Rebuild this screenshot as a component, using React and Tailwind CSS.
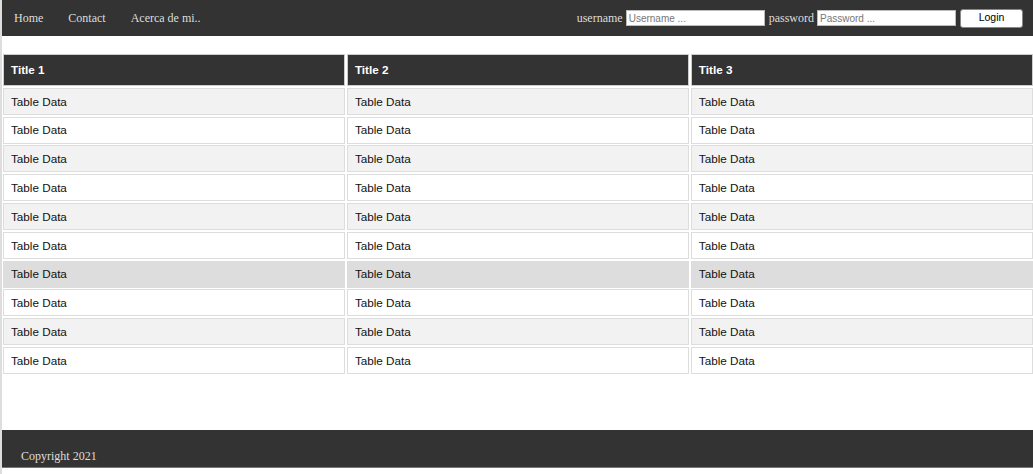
import React from "react";

const titles = ["Title 1", "Title 2", "Title 3"];
const rows = Array.from({ length: 10 }, (_, i) => i);

function rowBg(i) {
  if (i === 6) return "bg-[#dddddd]";
  return i % 2 === 0 ? "bg-[#f2f2f2]" : "bg-white";
}

export default function App() {
  return (
    <div className="min-h-[474px] bg-white border-l-2 border-[#dddddd] flex flex-col font-['Liberation_Sans',Arial,sans-serif]">
      <header className="h-[36px] bg-[#333333] flex items-center justify-between pr-[10px] font-['Liberation_Serif','Times_New_Roman',serif] text-[12px] text-[#dddddd]">
        <nav className="flex items-center pl-[12px] gap-[25px]">
          <a href="#">Home</a>
          <a href="#">Contact</a>
          <a href="#">Acerca de mi..</a>
        </nav>
        <form className="flex items-center" onSubmit={(e) => e.preventDefault()}>
          <label className="mr-[3px]">username</label>
          <input
            placeholder="Username ..."
            className="w-[139px] h-[16px] bg-white border border-[#bbb] px-[2px] text-[10px] text-black placeholder:text-[#777] font-['Liberation_Sans',Arial,sans-serif] outline-none"
          />
          <label className="ml-[4px] mr-[3px]">password</label>
          <input
            type="password"
            placeholder="Password ..."
            className="w-[139px] h-[16px] bg-white border border-[#bbb] px-[2px] text-[10px] text-black placeholder:text-[#777] font-['Liberation_Sans',Arial,sans-serif] outline-none"
          />
          <button className="ml-[4px] w-[63px] h-[19px] bg-white border border-[#888] rounded-[3px] text-[10.5px] text-black font-['Liberation_Sans',Arial,sans-serif]">
            Login
          </button>
        </form>
      </header>

      <div className="mt-[18px] pl-[1px]">
        <div className="grid grid-cols-3 gap-[1.8px]">
          {titles.map((t) => (
            <div
              key={t}
              className="h-[32px] bg-[#333333] border border-[#cccccc] flex items-center pl-[7px] text-[11.7px] font-bold text-white"
            >
              {t}
            </div>
          ))}
          {rows.map((i) =>
            titles.map((t) => (
              <div
                key={t + i}
                className={`h-[27px] ${rowBg(i)} border border-[#dddddd] flex items-center pl-[7px] text-[11.7px] text-[#111]`}
              >
                Table Data
              </div>
            ))
          )}
        </div>
      </div>

      <footer className="mt-[56px] h-[38px] bg-[#333333] border-b border-[#777] pl-[19px] pt-[17px] font-['Liberation_Serif','Times_New_Roman',serif] text-[12px] text-[#dddddd]">
        Copyright 2021
      </footer>
    </div>
  );
}
